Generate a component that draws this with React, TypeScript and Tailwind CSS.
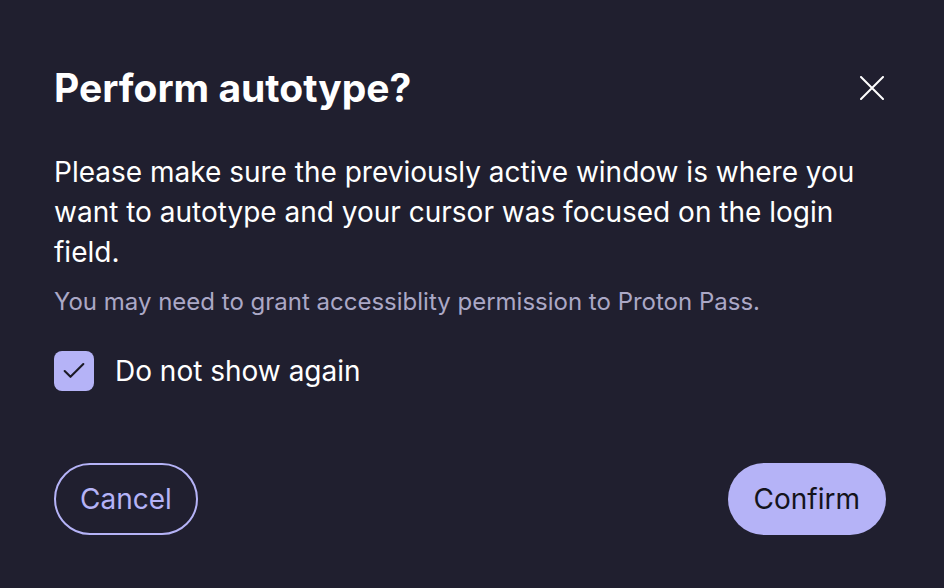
import { Check } from "lucide-react"

export default function App() {
  return (
    <div className="w-[944px] h-[588px] bg-[#201f2f] text-white font-['Inter',sans-serif] flex flex-col pl-[54px] pr-[58px] pt-[64px]">
      <div className="flex items-center justify-between">
        <h1 className="text-[39px] leading-[48px] font-bold">Perform autotype?</h1>
        <button className="w-[40px] h-[40px] flex items-center justify-center -mr-[6px] text-white">
          <svg width="24" height="24" viewBox="0 0 24 24" fill="none" stroke="currentColor" strokeWidth="2" strokeLinecap="round">
            <path d="M1 1 23 23M23 1 1 23" />
          </svg>
        </button>
      </div>

      <p className="mt-[40px] text-[28px] leading-[40px] text-white">
        Please make sure the previously active window is where you want to autotype and your cursor was focused on the login field.
      </p>

      <p className="mt-[14px] text-[24px] leading-[32px] text-[#aba8c6]">
        You may need to grant accessiblity permission to Proton Pass.
      </p>

      <label className="mt-[33px] flex items-center gap-[21px]">
        <span className="w-[40px] h-[40px] rounded-[8px] bg-[#b5b3f7] flex items-center justify-center text-[#1b1a26]">
          <Check size={28} strokeWidth={1.8} />
        </span>
        <span className="text-[28px] leading-[40px]">Do not show again</span>
      </label>

      <div className="mt-[72px] flex items-center justify-between">
        <button className="h-[72px] px-[24px] rounded-full border-2 border-[#b5b3f7] text-[#b5b3f7] text-[28px]">
          Cancel
        </button>
        <button className="h-[72px] px-[26px] rounded-full bg-[#b5b3f7] text-[#14131c] text-[28px]">
          Confirm
        </button>
      </div>
    </div>
  )
}
